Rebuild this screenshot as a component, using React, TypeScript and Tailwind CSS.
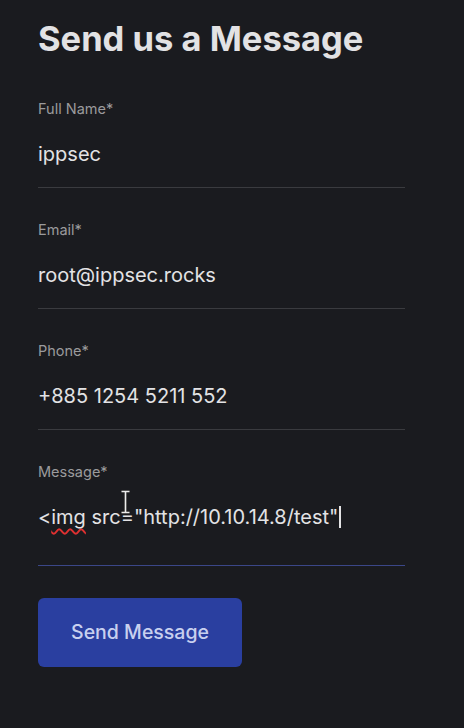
import React from "react";

function Field({ label, value, tall }: { label: string; value: React.ReactNode; tall?: boolean }) {
  return (
    <div className="w-[367px] mb-[32px]">
      <div className="h-[20px] text-[14.5px] leading-[20px] text-[#9a9a9c]">{label}</div>
      <div
        className={
          tall
            ? "h-[84px] border-b border-[#3b4788] pt-[21px]"
            : "h-[69px] border-b border-[#3a3b3f] pt-[21px]"
        }
      >
        <div className="h-[28px] text-[20px] leading-[28px] text-[#e3e3e5] relative">{value}</div>
      </div>
    </div>
  );
}

export default function App() {
  return (
    <div
      className="w-[464px] h-[728px] bg-[#1a1b1f] pl-[38px] pt-[19px] overflow-hidden"
      style={{ fontFamily: "Inter, 'Noto Sans', sans-serif" }}
    >
      <h1 className="text-[34.5px] leading-[40px] font-bold text-[#e2e2e4] mb-[40px]">
        Send us a Message
      </h1>
      <Field label="Full Name*" value="ippsec" />
      <Field label="Email*" value="root@ippsec.rocks" />
      <Field label="Phone*" value="+885 1254 5211 552" />
      <div className="relative">
        <Field
          tall
          label="Message*"
          value={
            <span className="inline-flex items-center">
              <span>&lt;</span>
              <span className="underline decoration-wavy decoration-[#e03030] decoration-[1.5px] underline-offset-[4px]">img</span>
              <span>&nbsp;src="http://10.10.14.8/test"</span>
              <span className="inline-block w-[1.5px] h-[22px] bg-[#e3e3e5] ml-[1px]" />
            </span>
          }
        />
        <svg className="absolute left-[82px] top-[28px]" width="11" height="24" viewBox="0 0 11 24">
          <path d="M1.5 1.5 H9.5 M5.5 1.5 V22.5 M1.5 22.5 H9.5" stroke="#222" strokeWidth="3.4" fill="none" />
          <path d="M1.5 1.5 H9.5 M5.5 1.5 V22.5 M1.5 22.5 H9.5" stroke="#ececec" strokeWidth="1.6" fill="none" />
        </svg>
      </div>
      <button className="w-[204px] h-[69px] rounded-[6px] bg-[#2a3fa0] text-[19.5px] text-[#c8d0ef] font-medium">
        Send Message
      </button>
    </div>
  );
}
